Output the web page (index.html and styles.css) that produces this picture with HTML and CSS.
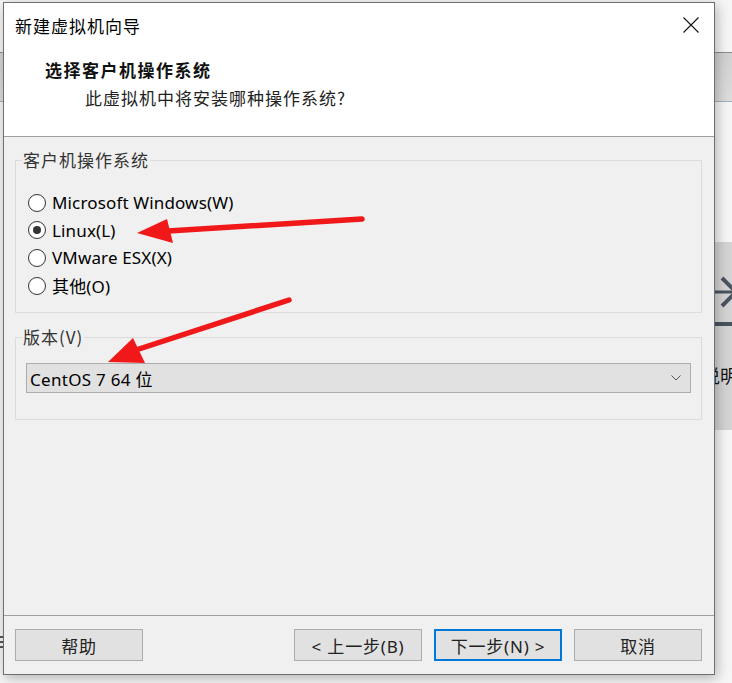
FILE: index.html
```html
<!DOCTYPE html>
<html lang="zh-CN">
<head>
<meta charset="utf-8">
<title>新建虚拟机向导</title>
<link rel="stylesheet" href="styles.css">
</head>
<body>
<div class="desktop">
  <div class="bg-band"></div>
  <div class="bg-panel">
    <svg class="bg-icon" width="40" height="60" viewBox="0 0 40 60">
      <path d="M0 16 H26" stroke="#4a545e" stroke-width="3" fill="none"/>
      <path d="M10 2 L24 16 L10 30" stroke="#4a545e" stroke-width="4" fill="none"/>
      <path d="M0 48 H40" stroke="#4a545e" stroke-width="4" fill="none"/>
    </svg>
    <span class="bg-text">说明</span>
  </div>
  <div class="bg-marks"></div>
</div>

<div class="dialog">
  <div class="header">
    <div class="titlebar">
      <span class="title">新建虚拟机向导</span>
      <svg class="close" width="16" height="16" viewBox="0 0 16 16">
        <path d="M0.5 0.5 L15.5 15.5 M15.5 0.5 L0.5 15.5" stroke="#111" stroke-width="1.1" fill="none"/>
      </svg>
    </div>
    <div class="heading">选择客户机操作系统</div>
    <div class="subheading">此虚拟机中将安装哪种操作系统?</div>
  </div>

  <div class="content">
    <fieldset class="group os-group">
      <legend>客户机操作系统</legend>
      <div class="radio"><span class="circle"></span><span class="label">Microsoft Windows(W)</span></div>
      <div class="radio"><span class="circle checked"></span><span class="label">Linux(L)</span></div>
      <div class="radio"><span class="circle"></span><span class="label">VMware ESX(X)</span></div>
      <div class="radio"><span class="circle"></span><span class="label">其他(O)</span></div>
    </fieldset>

    <fieldset class="group version-group">
      <legend>版本(V)</legend>
      <div class="select">
        <span class="select-text">CentOS 7 64 位</span>
        <svg class="chevron" width="10" height="6" viewBox="0 0 10 6">
          <path d="M0.5 0.5 L5 5 L9.5 0.5" stroke="#555" stroke-width="1" fill="none"/>
        </svg>
      </div>
    </fieldset>
  </div>

  <div class="footer">
    <div class="btn">帮助</div>
    <div class="spacer"></div>
    <div class="btn">&lt; 上一步(B)</div>
    <div class="btn default">下一步(N) &gt;</div>
    <div class="btn">取消</div>
  </div>
</div>

<svg class="arrows" width="732" height="683" viewBox="0 0 732 683">
  <path d="M362 219 L168 231" stroke="#f01818" stroke-width="5.5" stroke-linecap="round" fill="none"/>
  <polygon points="137,233 167,219 173,243" fill="#f01818"/>
  <path d="M289 300 L136 350" stroke="#f01818" stroke-width="5.5" stroke-linecap="round" fill="none"/>
  <polygon points="108,362 133,338 145,363" fill="#f01818"/>
</svg>
</body>
</html>
```

FILE: styles.css
```css
html, body {
  margin: 0;
  padding: 0;
}

body {
  width: 732px;
  height: 683px;
  overflow: hidden;
  position: relative;
  background: #f6f6f6;
  font-family: "Noto Sans", "Noto Sans CJK SC", sans-serif;
  color: #000;
}

.desktop {
  position: absolute;
  inset: 0;
  z-index: 0;
}

.bg-band {
  position: absolute;
  left: 0;
  right: 0;
  top: 52px;
  height: 48px;
  background: linear-gradient(#d2d2d2, #dcdcdc);
  border-top: 1px solid #8c8c8c;
  border-bottom: 1px solid #9fb2c4;
}

.bg-panel {
  position: absolute;
  left: 690px;
  top: 242px;
  width: 42px;
  height: 188px;
  background: #d4d4d4;
}

.bg-icon {
  position: absolute;
  left: 22px;
  top: 34px;
}

.bg-text {
  position: absolute;
  left: 12px;
  top: 120px;
  white-space: nowrap;
  font-size: 18px;
  font-family: "Noto Sans CJK SC", sans-serif;
  color: #111;
}

.bg-marks {
  position: absolute;
  left: 0;
  top: 636px;
  width: 3px;
  height: 14px;
  background: repeating-linear-gradient(#555 0 2px, transparent 2px 5px);
}

.dialog {
  position: relative;
  z-index: 1;
  margin: 2px 0 0 3px;
  width: 712px;
  height: 673px;
  box-sizing: border-box;
  border: 1px solid #6f6f6f;
  background: #f0f0f0;
  box-shadow: 2px 3px 12px rgba(0, 0, 0, 0.28);
  display: flex;
  flex-direction: column;
}

.header {
  height: 133px;
  background: #fff;
  border-bottom: 1px solid #a0a0a0;
}

.titlebar {
  height: 44px;
  display: flex;
  align-items: center;
  justify-content: space-between;
  padding: 0 15px 0 11px;
}

.title {
  font-family: "Noto Sans CJK SC", sans-serif;
  font-size: 17px;
  letter-spacing: 1px;
  color: #000;
}

.close {
  display: block;
}

.heading {
  margin-top: 9px;
  padding-left: 41px;
  line-height: 28px;
  font-size: 17px;
  font-weight: bold;
  letter-spacing: 1.5px;
  font-family: "Noto Sans CJK SC", sans-serif;
  color: #111;
}

.subheading {
  padding-left: 81px;
  line-height: 28px;
  font-size: 17px;
  letter-spacing: 1px;
  font-family: "Noto Sans CJK SC", sans-serif;
  color: #222;
}

.content {
  height: 478px;
  box-sizing: border-box;
  padding: 11px 12px 0 11px;
}

.group {
  margin: 0;
  border: 1px solid #dcdcdc;
  min-width: 0;
  padding-left: 6px;
  padding-right: 6px;
}

.group legend {
  padding: 0 1px;
  margin-left: 0;
  line-height: 24px;
  font-size: 17px;
  letter-spacing: 1px;
  font-family: "Noto Sans CJK SC", sans-serif;
  color: #333;
}

.os-group {
  padding-top: 17px;
  padding-bottom: 13px;
}

.radio {
  height: 27.6px;
  margin-left: 6px;
  display: flex;
  align-items: center;
  gap: 6px;
}

.circle {
  width: 18px;
  height: 18px;
  box-sizing: border-box;
  border: 1px solid #333;
  border-radius: 50%;
  background: #fff;
  display: flex;
  align-items: center;
  justify-content: center;
}

.circle.checked::after {
  content: "";
  width: 8px;
  height: 8px;
  border-radius: 50%;
  background: #333;
}

.label {
  font-size: 17px;
  letter-spacing: 0.15px;
  color: #000;
}

.version-group {
  margin-top: 12px;
  padding-top: 14px;
  padding-bottom: 26px;
}

.select {
  height: 30px;
  margin: 0 4px;
  box-sizing: border-box;
  border: 1px solid #adadad;
  background: #e1e1e1;
  display: flex;
  align-items: center;
  justify-content: space-between;
  padding: 0 9px 0 3px;
}

.select-text {
  font-size: 17px;
  letter-spacing: 0.3px;
  color: #000;
}

.chevron {
  display: block;
}

.footer {
  flex: 1;
  border-top: 1px solid #a0a0a0;
  display: flex;
  align-items: flex-start;
  gap: 12px;
  padding: 13px 12px 0 11px;
}

.spacer {
  flex: 1;
}

.btn {
  width: 128px;
  height: 32px;
  box-sizing: border-box;
  border: 1px solid #adadad;
  background: #e1e1e1;
  display: flex;
  align-items: center;
  justify-content: center;
  font-size: 17px;
  letter-spacing: 0.8px;
  color: #222;
  font-family: "Noto Sans", "Noto Sans CJK SC", sans-serif;
}

.btn.default {
  border: 2px solid #0078d7;
}

.arrows {
  position: absolute;
  left: 0;
  top: 0;
  z-index: 2;
  pointer-events: none;
}
```
